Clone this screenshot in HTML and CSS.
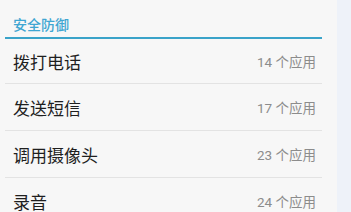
FILE: index.html
```
<!DOCTYPE html>
<html lang="zh-CN">
<head>
<meta charset="utf-8">
<link rel="stylesheet" href="styles.css">
</head>
<body>
<div class="screen">
  <div class="panel">
    <div class="section-head">安全防御</div>
    <div class="row first"><span class="name">拨打电话</span><span class="count">14 个应用</span></div>
    <div class="row"><span class="name">发送短信</span><span class="count">17 个应用</span></div>
    <div class="row"><span class="name">调用摄像头</span><span class="count">23 个应用</span></div>
    <div class="row"><span class="name">录音</span><span class="count">24 个应用</span></div>
  </div>
  <div class="side"></div>
</div>
</body>
</html>
```
FILE: styles.css
```
html, body {
  margin: 0;
  padding: 0;
  height: 100%;
  overflow: hidden;
}
body {
  font-family: Roboto, "Noto Sans CJK SC", sans-serif;
}
.screen {
  display: flex;
  height: 212px;
  overflow: hidden;
}
.panel {
  width: 317px;
  padding: 0 15px 0 5px;
  background: #f7f7f7;
  flex-shrink: 0;
}
.side {
  flex: 1;
  background: #eef2f9;
}
.section-head {
  height: 39px;
  box-sizing: border-box;
  padding: 18px 0 0 8px;
  font-size: 14px;
  line-height: 14px;
  font-weight: 500;
  color: #3fa6d2;
  border-bottom: 2px solid #3aa3c9;
}
.row {
  height: 46px;
  border-bottom: 1px solid #e3e3e3;
  display: flex;
  align-items: center;
  justify-content: space-between;
  padding: 0 6px 0 8px;
}
.row.first {
  height: 44px;
}
.name {
  font-size: 17px;
  color: #1f1f1f;
}
.count {
  font-size: 13.5px;
  color: #8c8c8c;
}
```
